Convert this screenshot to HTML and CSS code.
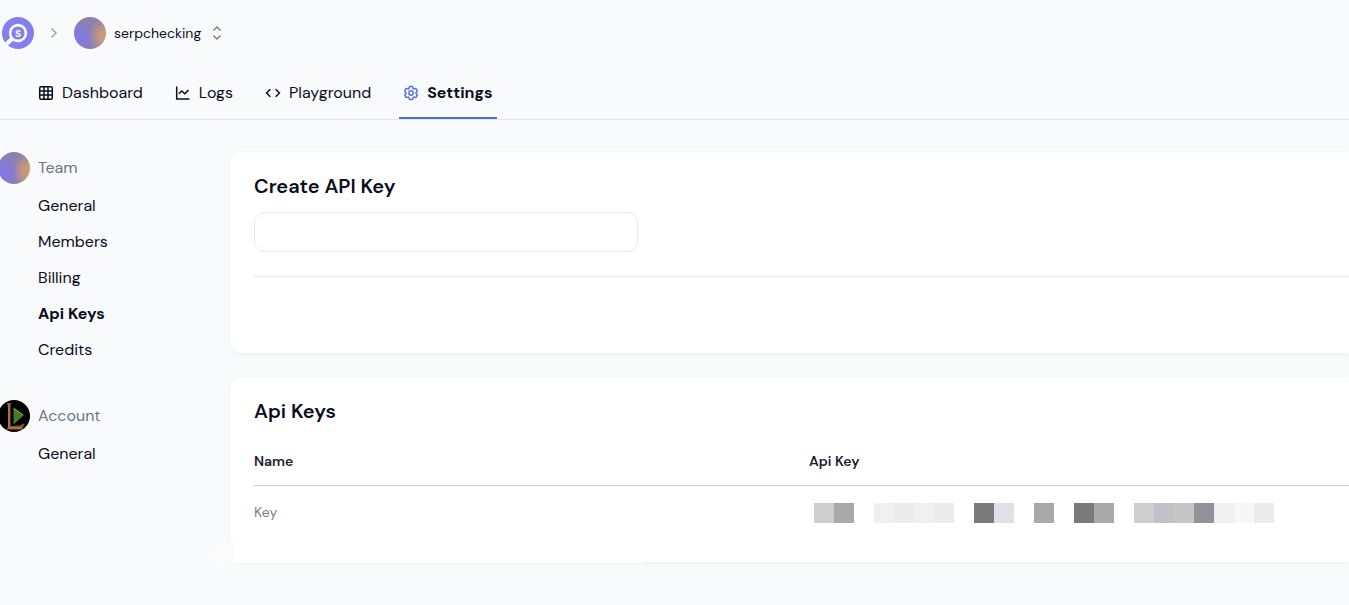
FILE: index.html
```html
<!DOCTYPE html>
<html lang="en">
<head>
<meta charset="utf-8">
<title>Api Keys</title>
<link rel="stylesheet" href="styles.css">
</head>
<body>
<header class="topbar">
  <a class="logo" href="#" aria-label="Home">
    <svg width="32" height="32" viewBox="0 0 32 32">
      <circle cx="16" cy="16" r="16" fill="#827fee"/>
      <path d="M11 21 3.500 28" stroke="#fafbfc" stroke-width="4.200"/>
      <circle cx="16" cy="16" r="7.900" fill="none" stroke="#fafbfc" stroke-width="2.600"/>
      <text class="logo-letter" x="16" y="19.500" text-anchor="middle">S</text>
    </svg>
  </a>
  <svg class="crumb" width="16" height="16" viewBox="0 0 16 16"><path d="m5.500 3.500 4.500 4.500-4.500 4.500"/></svg>
  <button class="team-switch" type="button">
    <span class="avatar"></span>
    <span>serpchecking</span>
    <svg class="updown" width="16" height="16" viewBox="0 0 16 16"><path d="m4.500 5.500 3.500-3.500 3.500 3.500M4.500 10.500l3.500 3.500 3.500-3.500"/></svg>
  </button>
</header>
<nav class="tabs">
  <a class="tab" href="#"><svg class="icon" viewBox="0 0 16 16"><rect x="1.700" y="1.700" width="12.600" height="12.600" rx="1.500"/><path d="M6 1.700v12.600M10 1.700v12.600M1.700 6h12.600M1.700 10h12.600"/></svg>Dashboard</a>
  <a class="tab" href="#"><svg class="icon" viewBox="0 0 16 16"><path d="M1.700 1.500v12.600h12.800M3.800 8.800l3-2.800 3 2.800 3.700-3.700"/></svg>Logs</a>
  <a class="tab" href="#"><svg class="icon" viewBox="0 0 16 16"><path d="M5.300 4.300 1.600 8l3.700 3.700M10.700 4.300 14.400 8l-3.700 3.700"/></svg>Playground</a>
  <a class="tab active" href="#"><svg class="icon gear" viewBox="1 1 22 22"><path d="M9.594 3.940c.09-.542.560-.940 1.110-.940h2.593c.550 0 1.020.398 1.110.940l.213 1.281c.063.374.313.686.645.870.074.040.147.083.220.127.325.196.720.257 1.075.124l1.217-.456a1.125 1.125 0 0 1 1.370.490l1.296 2.247a1.125 1.125 0 0 1-.260 1.431l-1.003.827c-.293.241-.438.613-.430.992a7.723 7.723 0 0 1 0 .255c-.008.378.137.750.430.991l1.004.827c.424.350.534.955.260 1.430l-1.298 2.247a1.125 1.125 0 0 1-1.369.491l-1.217-.456c-.355-.133-.750-.072-1.076.124a6.470 6.470 0 0 1-.220.128c-.331.183-.581.495-.644.869l-.213 1.281c-.090.543-.560.940-1.110.940h-2.594c-.550 0-1.019-.398-1.110-.940l-.213-1.281c-.062-.374-.312-.686-.644-.870a6.520 6.520 0 0 1-.220-.127c-.325-.196-.720-.257-1.076-.124l-1.217.456a1.125 1.125 0 0 1-1.369-.490l-1.297-2.247a1.125 1.125 0 0 1 .260-1.431l1.004-.827c.292-.240.437-.613.430-.991a6.932 6.932 0 0 1 0-.255c.007-.380-.138-.751-.430-.992l-1.004-.827a1.125 1.125 0 0 1-.260-1.430l1.297-2.247a1.125 1.125 0 0 1 1.370-.491l1.216.456c.356.133.751.072 1.076-.124.072-.044.146-.086.220-.128.332-.183.582-.495.644-.869l.214-1.280Z"/><circle cx="12" cy="12" r="3"/></svg>Settings</a>
</nav>
<div class="layout">
  <aside class="sidebar">
    <section>
      <h2 class="group"><span class="avatar"></span>Team</h2>
      <a class="item" href="#">General</a>
      <a class="item" href="#">Members</a>
      <a class="item" href="#">Billing</a>
      <a class="item current" href="#">Api Keys</a>
      <a class="item" href="#">Credits</a>
    </section>
    <section>
      <h2 class="group">
        <svg width="32" height="32" viewBox="0 0 32 32">
          <circle cx="16" cy="16" r="16" fill="#000"/>
          <path d="M8 3h5.500l-1 2v21l10-.5 2.500-2 1.500.5-2.500 5.500H8l2-2V5Z" fill="#8c5328"/>
          <path d="M11 4v24h12.500" fill="none" stroke="#c98f58"/>
          <path d="M15.500 7.500v17L26 15Z" fill="#447d20"/>
          <path d="M16 8.500 25 15" fill="none" stroke="#79a958"/>
        </svg>Account</h2>
      <a class="item" href="#">General</a>
    </section>
  </aside>
  <main class="content">
    <section class="card create">
      <h1 class="title"><label for="key-name">Create API Key</label></h1>
      <input class="field" id="key-name" type="text">
      <hr class="divider">
    </section>
    <section class="card keys">
      <h1 class="title">Api Keys</h1>
      <table class="table">
        <thead><tr><th>Name</th><th>Api Key</th></tr></thead>
        <tbody><tr><td>Key</td><td><div class="mask">
          <i class="c1"></i><i class="c2"></i><i></i><i class="c3"></i><i class="c4"></i><i class="c3"></i><i class="c4"></i><i></i><i class="c5"></i><i class="c6"></i><i></i><i class="c2"></i><i></i><i class="c5"></i><i class="c2"></i><i></i><i class="c1"></i><i class="c7"></i><i class="c8"></i><i class="c9"></i><i class="c3"></i><i class="c10"></i><i class="c4"></i>
        </div></td></tr></tbody>
      </table>
    </section>
  </main>
</div>
</body>
</html>
```
FILE: styles.css
```css
* { box-sizing: border-box; }
body {
  margin: 0;
  background: #f9fafc;
  color: #0a0d1c;
  font: 16px/24px "DM Sans", Inter, sans-serif;
  overflow-x: hidden;
}
a { color: inherit; text-decoration: none; }
h1, h2 { margin: 0; }
svg { display: block; flex: none; }
.topbar { display: flex; align-items: center; padding: 17px 2px 0; }
.logo-letter { font: 800 10px "DM Sans", Inter, sans-serif; fill: #fafbfc; }
.crumb, .updown, .icon { fill: none; stroke: currentColor; }
.crumb { margin: 0 12px; color: #a3a5ab; stroke-width: 1.5; }
.team-switch {
  display: flex;
  align-items: center;
  gap: 8px;
  padding: 0;
  border: 0;
  background: none;
  color: inherit;
  font: 14px/20px "DM Sans", Inter, sans-serif;
}
.updown { color: #77797f; stroke-width: 1.3; }
.avatar {
  flex: none;
  width: 32px;
  height: 32px;
  border-radius: 50%;
  background:
    radial-gradient(circle at 15% 65%, #8278e6 0 10%, transparent 50%),
    radial-gradient(circle at 100% 60%, #c99a78 0 15%, transparent 50%),
    #8e80b0;
}
.tabs {
  display: flex;
  gap: 24px;
  margin-top: 18px;
  padding-left: 34px;
  border-bottom: 1px solid #e3e6ec;
}
.tab {
  display: flex;
  align-items: center;
  gap: 8px;
  height: 52px;
  padding: 2px 4px 0;
  border-bottom: 2px solid transparent;
}
.icon { width: 16px; height: 16px; stroke-width: 1.5; }
.gear { color: #5470e0; stroke-width: 2; }
.active { border-color: #4f6be0; font-weight: 700; }
.layout { display: flex; padding-top: 32px; }
.sidebar { width: 230px; flex: none; }
.sidebar section { margin-bottom: 32px; }
.group {
  display: flex;
  align-items: center;
  gap: 8px;
  margin: 0 0 4px -2px;
  color: #6b7489;
  font-size: 16px;
  font-weight: 400;
}
.item { display: block; padding: 6px 0 6px 38px; }
.current { font-weight: 700; }
.content { flex: 1; min-width: 0; }
.card {
  padding: 20px 0 0 24px;
  margin-bottom: 24px;
  border-radius: 12px 0 0 12px;
  background: #fff;
  box-shadow: 0 1px 4px #0000000d;
}
.create { padding-bottom: 76px; }
.title { font-size: 20px; line-height: 28px; font-weight: 600; }
.field {
  display: block;
  width: 384px;
  height: 40px;
  margin-top: 12px;
  padding: 0 12px;
  border: 1px solid #e4e7ef;
  border-radius: 10px;
  background: #fff;
  font: inherit;
}
.divider { margin: 24px 0 0; border: 0; border-top: 1px solid #e2e5ee; }
.keys { position: relative; padding-bottom: 22px; }
.keys::before {
  content: "";
  position: absolute;
  left: -16px;
  bottom: 0;
  width: 20px;
  height: 20px;
  border-radius: 4px 0 0 8px;
  background: #fbfbfc;
}
.keys::after {
  content: "";
  position: absolute;
  left: 4px;
  bottom: -1px;
  width: 416px;
  height: 12px;
  border-radius: 0 0 12px 0;
  background: #fff;
}
.table {
  width: 100%;
  margin-top: 12px;
  border-collapse: collapse;
  table-layout: fixed;
  font-size: 14px;
  line-height: 20px;
  text-align: left;
}
th { padding: 14px 0; border-bottom: 1px solid #d1d5db; color: #1c202c; font-weight: 600; }
th:first-child { width: 555px; }
td { padding: 17px 0; color: #7b7d86; vertical-align: top; }
td:first-child { padding-top: 16px; }
.mask { display: flex; padding-left: 5px; }
.mask i { width: 20px; height: 20px; }
.c1 { background: #cecece; }
.c2 { background: #aaa; }
.c3 { background: #f0f0f1; }
.c4 { background: #ebebec; }
.c5 { background: #7a7a7a; }
.c6 { background: #e1e0e6; }
.c7 { background: #c2c1c8; }
.c8 { background: #c6c6c9; }
.c9 { background: #949299; }
.c10 { background: #f7f7f7; }
```
